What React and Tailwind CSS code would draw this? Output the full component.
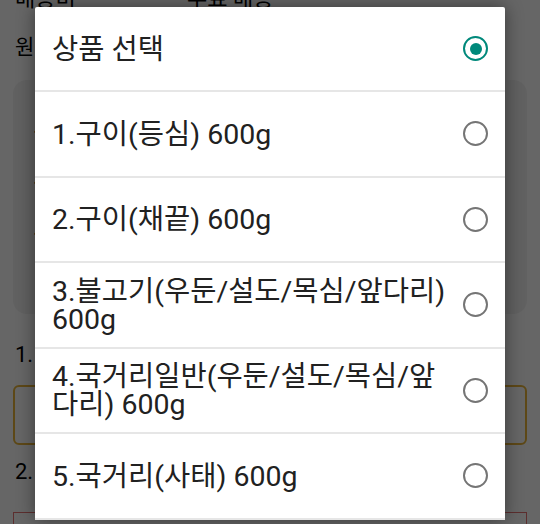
import React, { useState } from "react";

const options = [
  "1.구이(등심) 600g",
  "2.구이(채끝) 600g",
  "3.불고기(우둔/설도/목심/앞다리) 600g",
  "4.국거리일반(우둔/설도/목심/앞다리) 600g",
  "5.국거리(사태) 600g",
];

const Radio = ({ checked }) => (
  <div
    className={`w-[25px] h-[25px] rounded-full border-[2.5px] flex items-center justify-center shrink-0 ${
      checked ? "border-[#00897b]" : "border-[#757575]"
    }`}
  >
    {checked && <div className="w-[12px] h-[12px] rounded-full bg-[#00897b]" />}
  </div>
);

const App = () => {
  const [selected, setSelected] = useState(-1);

  return (
    <div
      className="relative w-[540px] h-[524px] overflow-hidden bg-white text-black"
      style={{ fontFamily: 'Roboto, "Noto Sans CJK KR", sans-serif' }}
    >
      {/* page behind the dialog */}
      <div className="px-[13px]">
        <div className="flex text-[22px] leading-[26px] -mt-[14px] pl-[2px]">
          <span className="w-[172px]">배송비</span>
          <span>무료 배송</span>
        </div>
        <div className="text-[21px] mt-[20px] pl-[2px]">원산지</div>
        <div className="mt-[16px] h-[234px] rounded-[14px] bg-[#f2f2f2] px-[20px] pt-[36px] flex flex-col gap-[18px] text-[22px]">
          <span>· 안내</span>
          <span>· 안내</span>
          <span>· 안내</span>
        </div>
        <div className="mt-[24px] text-[22px] pl-[2px]">1. 상품 선택</div>
        <div className="mt-[14px] h-[60px] rounded-[6px] border-2 border-[#e8b53a]" />
        <div className="mt-[10px] text-[22px] pl-[2px]">2. 수량</div>
        <div className="mt-[24px] h-[40px] border border-[#e57373]" />
      </div>

      {/* scrim */}
      <div className="absolute inset-0 bg-black/60" />

      {/* dialog */}
      <div className="absolute left-[35px] top-[7px] w-[470px] bg-white rounded-t-[2px] shadow-[0_0_18px_rgba(0,0,0,0.45)] text-[#212121]">
        <div className="h-[85px] flex items-center justify-between pl-[17px] pr-[17px] border-b-2 border-[#e6e6e6]">
          <span className="text-[28.5px] mt-[4px]">상품 선택</span>
          <Radio checked={selected === -1} />
        </div>
        {options.map((label, i) => (
          <div
            key={i}
            onClick={() => setSelected(i)}
            className="h-[85.5px] flex items-center justify-between pl-[17px] pr-[17px] border-b-2 border-[#e6e6e6]"
          >
            <span className="w-[396px] text-[28.5px] leading-[28px] mt-[2px]">{label}</span>
            <Radio checked={selected === i} />
          </div>
        ))}
      </div>
    </div>
  );
};

export default App;
